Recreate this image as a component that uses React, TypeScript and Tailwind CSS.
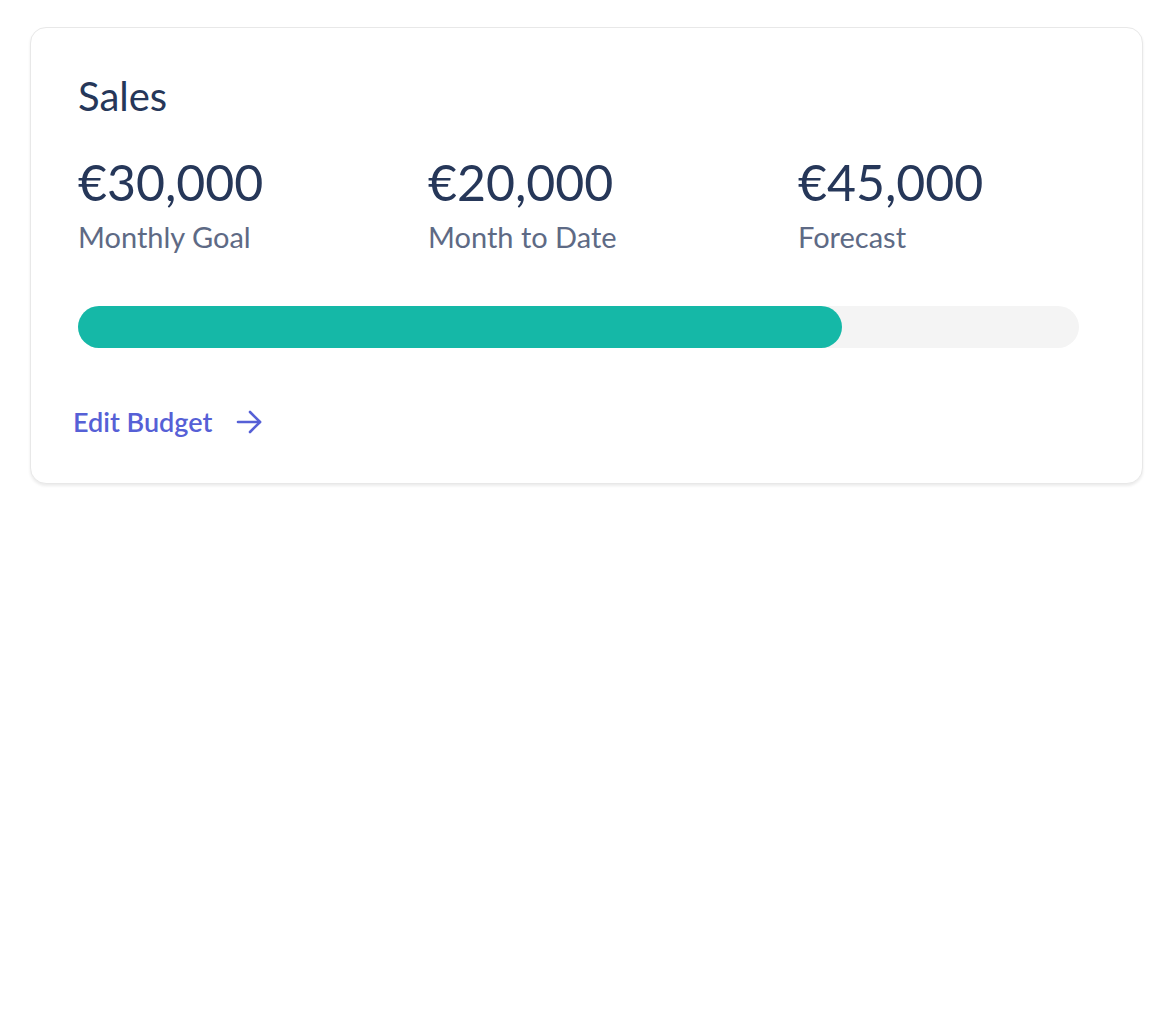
const stats = [
  { value: "€30,000", label: "Monthly Goal" },
  { value: "€20,000", label: "Month to Date" },
  { value: "€45,000", label: "Forecast" },
];

const App = () => {
  return (
    <div className="min-h-screen bg-white pl-[30px] pr-[27px] pt-[27px]" style={{ fontFamily: "Lato, 'Noto Sans', sans-serif" }}>
      <div className="rounded-2xl border border-[#e8e8e8] bg-white pl-[47px] pr-[63px] pt-[48px] pb-[48px] shadow-[0_2px_3px_rgba(0,0,0,0.08)]">
        <h2 className="text-[40px] leading-none text-[#263759]">Sales</h2>

        <div className="mt-[41px] grid grid-cols-[350px_370px_1fr]">
          {stats.map(({ value, label }) => (
            <div key={label}>
              <div className="text-[50px] leading-none text-[#263759]">{value}</div>
              <div className="mt-[15px] text-[29px] leading-none text-[#5e6a85]">{label}</div>
            </div>
          ))}
        </div>

        <div className="mt-[55px] h-[42px] w-full rounded-full bg-[#f4f4f4]">
          <div className="h-full w-[764px] rounded-full bg-[#15b8a7]" />
        </div>

        <a href="#" className="-ml-[5px] mt-[60px] flex w-fit items-center gap-[24px] text-[27px] font-semibold leading-none text-[#5660d6]">
          Edit Budget
          <svg width="26" height="24" viewBox="0 0 26 24" fill="none" stroke="currentColor" strokeWidth="2.6" strokeLinecap="round" strokeLinejoin="round">
            <path d="M2 12h22" />
            <path d="M14 2l10 10-10 10" />
          </svg>
        </a>
      </div>
    </div>
  );
};

export default App;
